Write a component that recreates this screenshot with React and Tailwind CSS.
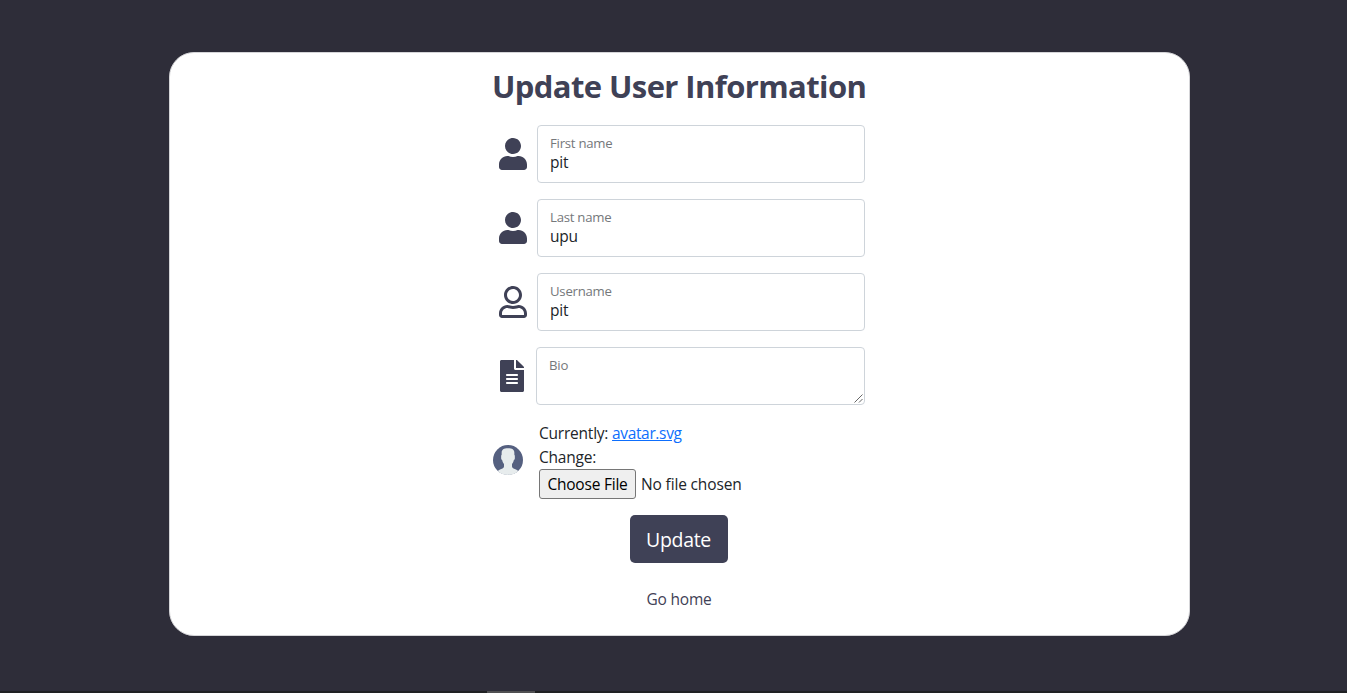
import { FaUser, FaRegUser, FaFileAlt } from "react-icons/fa";

function Field({ icon: Icon, label, value }) {
  return (
    <div className="mb-4 flex h-[58px] items-center">
      <Icon className="ml-[7px] h-8 w-7 text-[#3f4156]" />
      <label className="ml-[10px] block h-[58px] w-[328px] rounded-[4px] border border-[#ced4da] px-3 pt-2">
        <span className="block h-[18px] text-[13.2px] leading-[18px] tracking-[-0.25px] whitespace-nowrap text-[#75787b]">{label}</span>
        <span className="block h-5 text-[15.5px] leading-5 tracking-[-0.2px] text-[#212529]">{value}</span>
      </label>
    </div>
  );
}

function Avatar() {
  return (
    <svg className="mt-6 ml-px h-[30px] w-[30px]" viewBox="0 0 60 60">
      <circle cx="30" cy="30" r="30" fill="#556080" />
      <path
        d="M30 60c8 0 15.300-3 20.500-8-1.200-1.200-2.700-2-4.500-2.900l-5-2.300c-2-1-3-2.300-3-4.300V38c2.200-2.500 3.200-5.400 3.700-8 1.200-.5 2-1.700 2-3.200v-5c0-1-.4-1.800-1-2.400v-4C42.700 9 38.500 6.500 30 6.500S17.300 9 17.300 15.400v4c-.6.6-1 1.400-1 2.400v5c0 1.500.8 2.700 2 3.200.5 2.600 1.500 5.500 3.700 8v4.500c0 2-1 3.300-3 4.300l-5 2.300c-1.800.9-3.300 1.700-4.500 2.900C14.700 57 22 60 30 60z"
        fill="#e7eced"
      />
    </svg>
  );
}

export default function App() {
  return (
    <div className="flex h-[693px] flex-col overflow-hidden bg-[#2e2d39] font-['Open_Sans','Noto_Sans',sans-serif]">
      <main className="mt-[52px] ml-[169px] flex h-[584px] w-[1021px] shrink-0 flex-col items-center rounded-[25px] border border-[#d5d5d8] bg-white">
        <div className="w-[375px]">
          <h1 className="mt-[14px] mb-[20px] h-[38px] text-[31px] leading-[38px] font-bold tracking-[-0.6px] whitespace-nowrap text-[#3f4156]">
            Update User Information
          </h1>
          <Field icon={FaUser} label="First name" value="pit" />
          <Field icon={FaUser} label="Last name" value="upu" />
          <Field icon={FaRegUser} label="Username" value="pit" />
          <div className="mb-4 flex h-[58px] items-center">
            <FaFileAlt className="mr-[11.6px] ml-[8.4px] h-8 w-6 text-[#3f4156]" />
            <label className="relative block h-[58px] w-[329px] rounded-[4px] border border-[#ced4da] px-3 pt-2">
              <span className="block text-[13.2px] leading-[18px] tracking-[-0.2px] text-[#75787b]">Bio</span>
              <svg className="absolute right-px bottom-px h-[9px] w-[9px]" viewBox="0 0 9 9" stroke="#666" strokeWidth="1">
                <path d="M.5 8.500 8.500 .5M5 8.500 8.500 5" />
              </svg>
            </label>
          </div>
          <div className="flex h-[78px]">
            <Avatar />
            <div className="ml-4 text-[15.5px] leading-6 tracking-[-0.22px] whitespace-nowrap text-[#212529]">
              <p>
                <span>Currently: </span>
                <a className="tracking-[-0.35px] text-[#0d6efd] underline" href="#avatar">avatar.svg</a>
              </p>
              <p>Change:</p>
              <div className="flex items-center">
                <button className="h-[30px] w-[97px] rounded-[3px] border border-[#767676] bg-[#efefef] text-black">Choose File</button>
                <span className="ml-[5px] tracking-[-0.15px]">No file chosen</span>
              </div>
            </div>
          </div>
        </div>
        <button className="mt-4 mr-0.5 h-12 w-[98px] rounded-[5px] bg-[#3f4156] pt-0.5 text-[19.5px] tracking-[-0.3px] text-white">Update</button>
        <a className="mt-6 mr-px text-[15.5px] leading-6 tracking-[-0.2px] text-[#3f4156]" href="#home">Go home</a>
      </main>
      <div className="mt-auto h-0.5 shrink-0 bg-[#202123]">
        <div className="ml-[487px] h-0.5 w-12 bg-[#505052]" />
      </div>
    </div>
  );
}
